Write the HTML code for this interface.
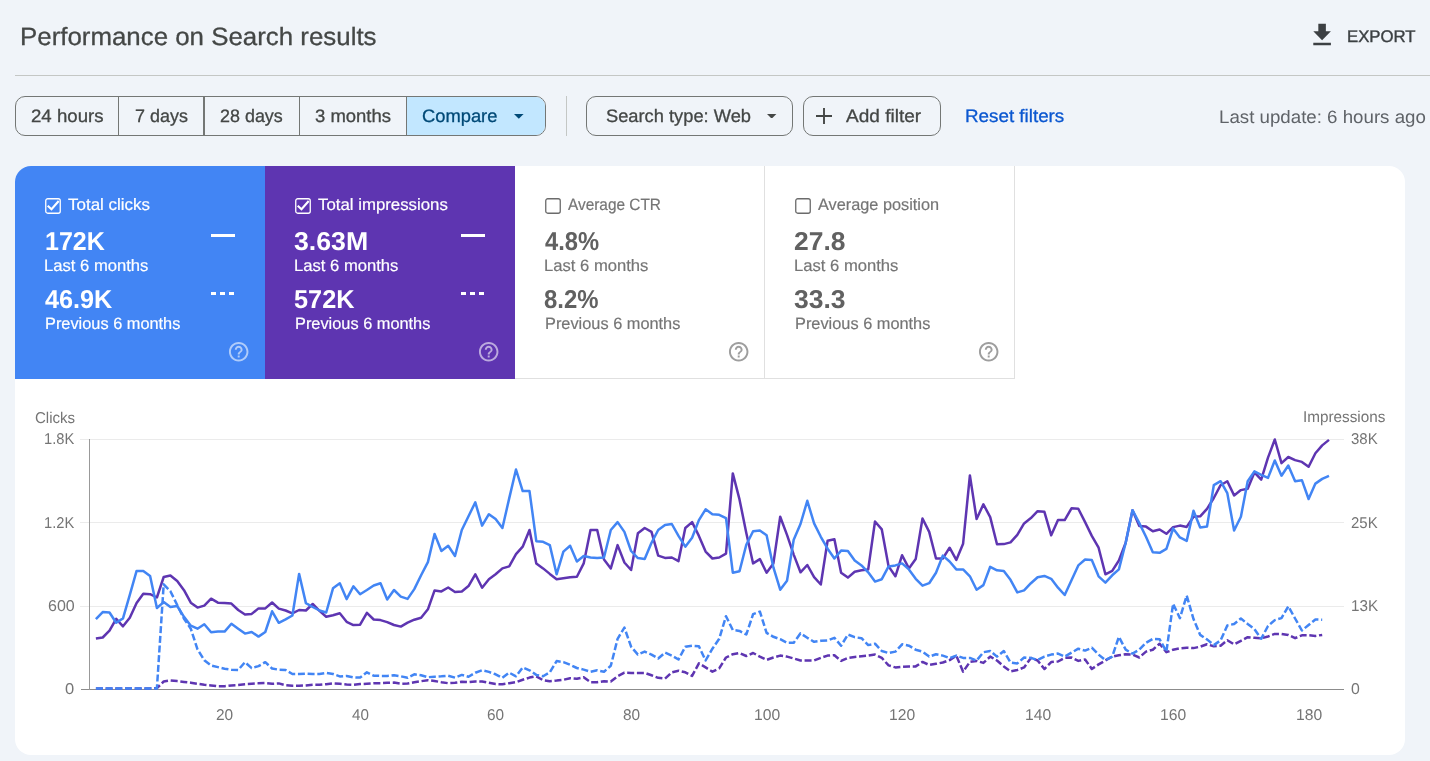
<!DOCTYPE html>
<html lang="en"><head><meta charset="utf-8"><title>Performance on Search results</title>
<style>
html,body{margin:0;padding:0}
body{width:1430px;height:761px;overflow:hidden;background:#f0f4f9;font-family:"Liberation Sans",sans-serif;position:relative}
.a{position:absolute;display:block}
.t{position:absolute;white-space:nowrap;line-height:1;transform-origin:0 84.65%;text-rendering:geometricPrecision}
.btn{position:absolute;box-sizing:border-box;top:96px;height:40px;border:1px solid #747775}
</style></head>
<body>
<svg class="a" style="left:1307px;top:20.2px" width="30.2" height="30.2" viewBox="0 0 24 24"><path fill="#3c4043" d="M19 9h-4V3H9v6H5l7 7 7-7zM5 18v2h14v-2H5z"/></svg>
<div class="a" style="left:15px;top:75px;width:1415px;height:1px;background:#c4c7c5"></div>
<div class="btn" style="left:15px;width:531px;border-radius:10px;overflow:hidden"><div class="a" style="left:390.2px;top:0;width:140px;height:38px;background:#c2e7ff"></div><div class="a" style="left:101.7px;top:0;width:1.2px;height:38px;background:#747775"></div><div class="a" style="left:187.1px;top:0;width:1.6px;height:38px;background:#747775"></div><div class="a" style="left:282.7px;top:0;width:1.2px;height:38px;background:#747775"></div><div class="a" style="left:389.8px;top:0;width:1.2px;height:38px;background:#747775"></div></div>
<svg class="a" style="left:514px;top:113.8px" width="9.6" height="4.8" viewBox="0 0 10 5"><path fill="#004a77" d="M0 0h10L5 5z"/></svg>
<div class="a" style="left:566px;top:96px;width:1px;height:40px;background:#c4c7c5"></div>
<div class="btn" style="left:586px;width:206.8px;border-radius:10px"></div>
<svg class="a" style="left:767.4px;top:113.7px" width="9.4" height="4.7" viewBox="0 0 10 5"><path fill="#444746" d="M0 0h10L5 5z"/></svg>
<div class="btn" style="left:803px;width:137.8px;border-radius:10px"></div>
<svg class="a" style="left:816px;top:107.8px" width="16" height="16" viewBox="0 0 16 16"><path stroke="#444746" stroke-width="1.9" fill="none" d="M8 0v16M0 8h16"/></svg>
<div class="a" style="left:15px;top:166px;width:1390px;height:589.4px;background:#fff;border-radius:16px;overflow:hidden"><div class="a" style="left:0;top:0;width:250px;height:212.5px;background:#4285f4"></div><div class="a" style="left:250px;top:0;width:250px;height:212.5px;background:#5e35b1"></div><div class="a" style="left:500px;top:0;width:249px;height:211.5px;border-right:1px solid #e0e0e0;border-bottom:1px solid #e0e0e0"></div><div class="a" style="left:750px;top:0;width:249px;height:211.5px;border-right:1px solid #e0e0e0;border-bottom:1px solid #e0e0e0"></div></div>
<svg class="a" style="left:45px;top:198px" width="16" height="16" viewBox="0 0 16 16"><rect x="0.75" y="0.75" width="14.5" height="14.5" rx="2" fill="none" stroke="#fff" stroke-width="1.3"/><path d="M2.7 7.7 L6.5 11.2 L13.7 3.0" fill="none" stroke="#fff" stroke-width="2.1"/></svg><div class="a" style="left:211px;top:234.4px;width:24.1px;height:2.8px;background:#fff"></div><div class="a" style="left:211.0px;top:292.3px;width:5.2px;height:3px;background:#fff"></div><div class="a" style="left:220.0px;top:292.3px;width:5.2px;height:3px;background:#fff"></div><div class="a" style="left:229.0px;top:292.3px;width:5.2px;height:3px;background:#fff"></div><svg class="a" style="left:227.2px;top:340px" width="23.4" height="23.4" viewBox="0 0 24 24"><path fill="rgba(255,255,255,0.58)" d="M11 18h2v-2h-2v2zm1-16C6.48 2 2 6.48 2 12s4.48 10 10 10 10-4.48 10-10S17.52 2 12 2zm0 18c-4.41 0-8-3.59-8-8s3.590-8 8-8 8 3.590 8 8-3.590 8-8 8zm0-14c-2.210 0-4 1.790-4 4h2c0-1.100.9-2 2-2s2 .9 2 2c0 2-3 1.750-3 5h2c0-2.250 3-2.500 3-5 0-2.210-1.790-4-4-4z"/></svg>
<svg class="a" style="left:295px;top:198px" width="16" height="16" viewBox="0 0 16 16"><rect x="0.75" y="0.75" width="14.5" height="14.5" rx="2" fill="none" stroke="#fff" stroke-width="1.3"/><path d="M2.7 7.7 L6.5 11.2 L13.7 3.0" fill="none" stroke="#fff" stroke-width="2.1"/></svg><div class="a" style="left:461px;top:234.4px;width:24.1px;height:2.8px;background:#fff"></div><div class="a" style="left:461.0px;top:292.3px;width:5.2px;height:3px;background:#fff"></div><div class="a" style="left:470.0px;top:292.3px;width:5.2px;height:3px;background:#fff"></div><div class="a" style="left:479.0px;top:292.3px;width:5.2px;height:3px;background:#fff"></div><svg class="a" style="left:477.2px;top:340px" width="23.4" height="23.4" viewBox="0 0 24 24"><path fill="rgba(255,255,255,0.58)" d="M11 18h2v-2h-2v2zm1-16C6.48 2 2 6.48 2 12s4.48 10 10 10 10-4.48 10-10S17.52 2 12 2zm0 18c-4.41 0-8-3.59-8-8s3.590-8 8-8 8 3.590 8 8-3.590 8-8 8zm0-14c-2.210 0-4 1.790-4 4h2c0-1.100.9-2 2-2s2 .9 2 2c0 2-3 1.750-3 5h2c0-2.250 3-2.500 3-5 0-2.210-1.790-4-4-4z"/></svg>
<svg class="a" style="left:545px;top:198px" width="16" height="16" viewBox="0 0 16 16"><rect x="0.75" y="0.75" width="14.5" height="14.5" rx="2" fill="#fff" stroke="#6b6b6b" stroke-width="1.3"/></svg><svg class="a" style="left:727.2px;top:340px" width="23.4" height="23.4" viewBox="0 0 24 24"><path fill="#9e9e9e" d="M11 18h2v-2h-2v2zm1-16C6.48 2 2 6.48 2 12s4.48 10 10 10 10-4.48 10-10S17.52 2 12 2zm0 18c-4.41 0-8-3.59-8-8s3.590-8 8-8 8 3.590 8 8-3.590 8-8 8zm0-14c-2.210 0-4 1.790-4 4h2c0-1.100.9-2 2-2s2 .9 2 2c0 2-3 1.750-3 5h2c0-2.250 3-2.500 3-5 0-2.210-1.790-4-4-4z"/></svg>
<svg class="a" style="left:795px;top:198px" width="16" height="16" viewBox="0 0 16 16"><rect x="0.75" y="0.75" width="14.5" height="14.5" rx="2" fill="#fff" stroke="#6b6b6b" stroke-width="1.3"/></svg><svg class="a" style="left:977.2px;top:340px" width="23.4" height="23.4" viewBox="0 0 24 24"><path fill="#9e9e9e" d="M11 18h2v-2h-2v2zm1-16C6.48 2 2 6.48 2 12s4.48 10 10 10 10-4.48 10-10S17.52 2 12 2zm0 18c-4.41 0-8-3.59-8-8s3.590-8 8-8 8 3.590 8 8-3.590 8-8 8zm0-14c-2.210 0-4 1.790-4 4h2c0-1.100.9-2 2-2s2 .9 2 2c0 2-3 1.750-3 5h2c0-2.250 3-2.500 3-5 0-2.210-1.790-4-4-4z"/></svg>
<svg class="a" style="left:0;top:400px" width="1430" height="361" viewBox="0 400 1430 361">
<rect x="80" y="439" width="1264" height="1" fill="#ebebeb"/>
<rect x="80" y="522" width="1264" height="1" fill="#ebebeb"/>
<rect x="80" y="606" width="1264" height="1" fill="#ebebeb"/>
<rect x="81" y="689" width="1263" height="1" fill="#8c8c8c"/>
<rect x="89" y="439" width="1" height="251" fill="#999"/>
<defs><clipPath id="ca"><rect x="89" y="430" width="1256" height="260"/></clipPath></defs><g clip-path="url(#ca)">
<polyline fill="none" stroke="#5e35b1" stroke-width="2.5" stroke-linejoin="round" stroke-dasharray="7 2.7" points="95.9,688.4 102.7,688.4 109.5,688.4 116.2,688.4 123.0,688.4 129.8,688.4 136.6,688.4 143.3,688.4 150.1,688.4 156.9,688.2 163.7,681.5 170.4,680.5 177.2,681.1 184.0,681.9 190.8,682.7 197.5,683.8 204.3,684.8 211.1,685.4 217.9,686.2 224.6,686.2 231.4,685.4 238.2,685.0 245.0,684.2 251.7,683.8 258.5,683.3 265.3,683.1 272.1,683.8 278.8,683.4 285.6,685.2 292.4,685.8 299.1,685.8 305.9,685.4 312.7,684.8 319.5,684.8 326.2,684.2 333.0,683.4 339.8,683.8 346.6,684.4 353.4,684.8 360.1,684.1 366.9,683.7 373.7,683.2 380.5,683.2 387.2,682.8 394.0,682.6 400.8,683.7 407.6,683.5 414.3,682.2 421.1,681.2 427.9,680.2 434.6,681.0 441.4,682.2 448.2,683.2 455.0,682.8 461.8,681.8 468.5,682.2 475.3,681.4 482.1,681.6 488.9,682.8 495.6,684.1 502.4,684.3 509.2,683.2 516.0,682.2 522.7,679.8 529.5,677.6 536.3,676.3 543.1,680.2 549.8,681.2 556.6,680.6 563.4,679.8 570.1,678.2 576.9,678.8 583.7,677.2 590.5,682.2 597.2,682.2 604.0,681.2 610.8,681.6 617.6,676.3 624.4,672.7 631.1,672.9 637.9,672.9 644.7,672.9 651.5,675.3 658.2,677.8 665.0,678.6 671.8,672.3 678.5,670.7 685.3,672.3 692.1,675.9 698.9,663.4 705.6,667.4 712.4,671.7 719.2,668.4 726.0,657.5 732.8,654.2 739.5,653.0 746.3,656.0 753.1,653.0 759.9,656.6 766.6,659.9 773.4,657.5 780.2,655.6 787.0,656.6 793.7,658.5 800.5,660.5 807.3,660.5 814.1,660.5 820.8,657.9 827.6,655.6 834.4,655.2 841.1,660.9 847.9,657.9 854.7,656.9 861.5,656.2 868.2,655.6 875.0,654.6 881.8,657.9 888.6,665.4 895.4,667.4 902.1,666.8 908.9,666.4 915.7,666.4 922.5,661.9 929.2,665.0 936.0,663.8 942.8,662.5 949.6,660.1 956.3,655.6 963.1,671.7 969.9,661.9 976.6,660.9 983.4,662.9 990.2,656.6 997.0,660.5 1003.8,666.4 1010.5,671.3 1017.3,670.0 1024.1,667.4 1030.9,657.9 1037.6,660.5 1044.4,669.0 1051.2,662.1 1058.0,661.5 1064.7,657.9 1071.5,657.5 1078.3,660.9 1085.1,659.5 1091.8,669.0 1098.6,664.4 1105.4,660.5 1112.2,656.6 1118.9,655.2 1125.7,654.2 1132.5,654.6 1139.3,657.5 1146.0,651.6 1152.8,649.7 1159.6,643.7 1166.4,652.2 1173.1,649.7 1179.9,648.3 1186.7,647.7 1193.5,648.1 1200.2,646.7 1207.0,644.3 1213.8,646.3 1220.6,645.7 1227.3,640.2 1234.1,644.3 1240.9,640.8 1247.7,637.2 1254.4,637.8 1261.2,638.4 1268.0,636.5 1274.8,633.9 1281.5,633.9 1288.3,634.9 1295.1,638.2 1301.9,635.3 1308.6,635.3 1315.4,635.9 1322.2,634.9"/>
<polyline fill="none" stroke="#5e35b1" stroke-width="2.5" stroke-linejoin="round" points="95.9,638.5 102.7,637.5 109.5,630.6 116.2,618.8 123.0,626.3 129.8,617.8 136.6,603.1 143.3,593.8 150.1,594.2 156.9,597.5 163.7,577.0 170.4,575.5 177.2,581.0 184.0,590.2 190.8,602.7 197.5,607.6 204.3,605.6 211.1,598.7 217.9,602.7 224.6,603.1 231.4,603.6 238.2,610.0 245.0,614.5 251.7,613.9 258.5,608.4 265.3,608.4 272.1,602.5 278.8,608.6 285.6,610.5 292.4,613.3 299.1,610.0 305.9,610.5 312.7,604.0 319.5,610.9 326.2,616.8 333.0,615.3 339.8,613.3 346.6,621.8 353.4,625.1 360.1,624.7 366.9,612.8 373.7,619.5 380.5,620.1 387.2,622.1 394.0,625.0 400.8,626.6 407.6,622.7 414.3,619.7 421.1,617.7 427.9,609.3 434.6,590.4 441.4,591.4 448.2,587.5 455.0,592.0 461.8,591.4 468.5,586.1 475.3,574.3 482.1,587.7 488.9,579.2 495.6,574.3 502.4,568.4 509.2,566.4 516.0,554.2 522.7,546.7 529.5,530.0 536.3,563.4 543.1,568.4 549.8,573.9 556.6,579.2 563.4,578.2 570.1,577.2 576.9,576.7 583.7,563.4 590.5,530.0 597.2,530.0 604.0,559.5 610.8,568.4 617.6,545.1 624.4,562.5 631.1,570.0 637.9,533.3 644.7,528.0 651.5,531.9 658.2,555.6 665.0,557.9 671.8,557.5 678.5,561.1 685.3,528.0 692.1,522.1 698.9,535.9 705.6,551.6 712.4,558.5 719.2,557.5 726.0,553.6 732.8,473.4 739.5,499.4 746.3,532.9 753.1,563.4 759.9,559.1 766.6,572.7 773.4,563.4 780.2,516.7 787.0,534.9 793.7,554.6 800.5,572.3 807.3,565.0 814.1,577.2 820.8,584.5 827.6,540.8 834.4,539.2 841.1,572.7 847.9,577.6 854.7,571.7 861.5,570.3 868.2,569.4 875.0,521.5 881.8,529.4 888.6,566.4 895.4,576.3 902.1,555.2 908.9,568.4 915.7,559.1 922.5,518.5 929.2,531.9 936.0,558.5 942.8,558.5 949.6,547.7 956.3,559.9 963.1,543.7 969.9,475.4 976.6,519.1 983.4,504.3 990.2,517.1 997.0,544.3 1003.8,544.1 1010.5,542.4 1017.3,534.9 1024.1,523.4 1030.9,518.1 1037.6,511.2 1044.4,511.8 1051.2,535.3 1058.0,520.1 1064.7,520.1 1071.5,508.3 1078.3,508.7 1085.1,522.1 1091.8,535.9 1098.6,547.7 1105.4,574.3 1112.2,570.9 1118.9,560.5 1125.7,542.8 1132.5,510.2 1139.3,526.0 1146.0,526.6 1152.8,531.3 1159.6,529.5 1166.4,533.8 1173.1,527.1 1179.9,525.6 1186.7,526.9 1193.5,516.7 1200.2,516.3 1207.0,508.8 1213.8,498.0 1220.6,485.2 1227.3,481.2 1234.1,495.4 1240.9,490.1 1247.7,488.7 1254.4,472.4 1261.2,479.7 1268.0,457.6 1274.8,439.5 1281.5,463.1 1288.3,457.0 1295.1,460.1 1301.9,461.9 1308.6,466.8 1315.4,453.3 1322.2,445.4 1329.0,439.9"/>
<polyline fill="none" stroke="#4285f4" stroke-width="2.5" stroke-linejoin="round" stroke-dasharray="7 2.7" points="95.9,688.4 102.7,688.4 109.5,688.4 116.2,688.4 123.0,688.4 129.8,688.4 136.6,688.4 143.3,688.4 150.1,688.4 156.9,688.4 163.7,584.3 170.4,591.2 177.2,605.0 184.0,618.8 190.8,628.7 197.5,649.4 204.3,660.2 211.1,665.5 217.9,667.1 224.6,668.7 231.4,669.7 238.2,670.0 245.0,662.2 251.7,668.1 258.5,666.1 265.3,662.2 272.1,668.5 278.8,669.7 285.6,670.0 292.4,674.0 299.1,674.0 305.9,673.6 312.7,674.0 319.5,674.0 326.2,673.0 333.0,674.0 339.8,676.4 346.6,676.0 353.4,677.3 360.1,677.6 366.9,672.3 373.7,675.7 380.5,675.9 387.2,675.9 394.0,675.3 400.8,676.3 407.6,677.8 414.3,674.3 421.1,675.3 427.9,677.2 434.6,676.7 441.4,676.3 448.2,675.7 455.0,677.6 461.8,674.9 468.5,676.8 475.3,672.7 482.1,670.3 488.9,671.9 495.6,674.3 502.4,677.8 509.2,672.7 516.0,676.3 522.7,667.4 529.5,670.3 536.3,674.9 543.1,676.3 549.8,672.3 556.6,661.1 563.4,662.1 570.1,664.8 576.9,668.0 583.7,669.6 590.5,671.7 597.2,670.3 604.0,671.7 610.8,665.8 617.6,638.8 624.4,627.6 631.1,646.7 637.9,654.6 644.7,651.6 651.5,654.6 658.2,658.5 665.0,652.6 671.8,655.6 678.5,659.5 685.3,646.7 692.1,645.7 698.9,646.3 705.6,660.5 712.4,648.7 719.2,638.8 726.0,616.2 732.8,630.0 739.5,630.9 746.3,634.5 753.1,614.2 759.9,611.6 766.6,632.9 773.4,636.8 780.2,639.2 787.0,642.8 793.7,642.8 800.5,633.3 807.3,637.8 814.1,641.8 820.8,640.8 827.6,640.4 834.4,637.8 841.1,645.7 847.9,634.5 854.7,637.2 861.5,638.2 868.2,645.1 875.0,643.7 881.8,651.0 888.6,653.0 895.4,651.6 902.1,644.3 908.9,645.7 915.7,649.7 922.5,651.6 929.2,656.6 936.0,654.2 942.8,655.6 949.6,658.1 956.3,655.6 963.1,657.9 969.9,657.9 976.6,660.5 983.4,652.2 990.2,651.0 997.0,656.6 1003.8,651.0 1010.5,662.5 1017.3,663.4 1024.1,657.5 1030.9,657.9 1037.6,660.1 1044.4,656.6 1051.2,654.6 1058.0,653.6 1064.7,656.6 1071.5,652.6 1078.3,648.7 1085.1,650.6 1091.8,647.7 1098.6,654.6 1105.4,660.1 1112.2,656.6 1118.9,636.8 1125.7,649.7 1132.5,653.6 1139.3,649.7 1146.0,642.8 1152.8,638.8 1159.6,639.2 1166.4,651.6 1173.1,603.7 1179.9,618.1 1186.7,595.5 1193.5,619.1 1200.2,634.9 1207.0,639.4 1213.8,645.1 1220.6,640.4 1227.3,625.4 1234.1,624.0 1240.9,618.5 1247.7,624.0 1254.4,629.0 1261.2,638.8 1268.0,626.0 1274.8,620.1 1281.5,618.1 1288.3,606.3 1295.1,618.5 1301.9,630.5 1308.6,625.0 1315.4,619.5 1322.2,619.7"/>
<polyline fill="none" stroke="#4285f4" stroke-width="2.5" stroke-linejoin="round" points="95.9,619.2 102.7,612.1 109.5,612.5 116.2,622.8 123.0,618.4 129.8,594.8 136.6,570.9 143.3,571.1 150.1,576.1 156.9,608.0 163.7,602.1 170.4,607.0 177.2,606.0 184.0,616.8 190.8,625.7 197.5,628.7 204.3,624.3 211.1,632.2 217.9,631.6 224.6,631.6 231.4,623.7 238.2,628.7 245.0,633.6 251.7,632.0 258.5,636.6 265.3,632.0 272.1,611.3 278.8,622.8 285.6,619.4 292.4,615.5 299.1,573.9 305.9,603.1 312.7,607.0 319.5,610.5 326.2,612.5 333.0,588.3 339.8,583.3 346.6,599.1 353.4,586.3 360.1,594.2 366.9,590.0 373.7,585.5 380.5,583.2 387.2,599.5 394.0,590.0 400.8,596.6 407.6,598.9 414.3,589.1 421.1,575.3 427.9,562.1 434.6,533.9 441.4,551.0 448.2,545.7 455.0,556.0 461.8,530.0 468.5,516.2 475.3,502.4 482.1,525.6 488.9,514.2 495.6,519.1 502.4,528.0 509.2,498.4 516.0,469.5 522.7,491.1 529.5,491.1 536.3,541.2 543.1,541.8 549.8,545.1 556.6,574.3 563.4,551.6 570.1,545.7 576.9,561.5 583.7,556.0 590.5,557.5 597.2,558.1 604.0,557.5 610.8,530.0 617.6,522.1 624.4,531.9 631.1,551.0 637.9,558.1 644.7,559.1 651.5,542.8 658.2,530.0 665.0,525.0 671.8,524.0 678.5,535.9 685.3,546.7 692.1,537.8 698.9,520.1 705.6,509.3 712.4,514.2 719.2,514.8 726.0,518.1 732.8,572.7 739.5,571.3 746.3,544.7 753.1,531.3 759.9,530.5 766.6,535.3 773.4,567.4 780.2,589.7 787.0,580.8 793.7,539.8 800.5,524.0 807.3,500.8 814.1,523.4 820.8,536.8 827.6,548.7 834.4,558.5 841.1,550.6 847.9,551.0 854.7,560.5 861.5,565.4 868.2,572.3 875.0,581.6 881.8,579.2 888.6,566.4 895.4,565.4 902.1,563.4 908.9,569.4 915.7,578.8 922.5,585.7 929.2,583.2 936.0,572.7 942.8,555.6 949.6,561.5 956.3,569.4 963.1,569.4 969.9,576.3 976.6,589.7 983.4,585.1 990.2,566.8 997.0,570.3 1003.8,570.9 1010.5,579.8 1017.3,592.4 1024.1,590.4 1030.9,583.2 1037.6,577.2 1044.4,575.9 1051.2,578.8 1058.0,587.7 1064.7,595.0 1071.5,580.2 1078.3,565.4 1085.1,559.5 1091.8,560.1 1098.6,576.3 1105.4,582.6 1112.2,575.3 1118.9,569.4 1125.7,542.8 1132.5,510.2 1139.3,523.1 1146.0,536.8 1152.8,552.2 1159.6,552.8 1166.4,548.8 1173.1,528.5 1179.9,537.4 1186.7,540.9 1193.5,510.8 1200.2,527.5 1207.0,526.6 1213.8,485.2 1220.6,481.2 1227.3,493.1 1234.1,530.5 1240.9,516.7 1247.7,481.2 1254.4,471.4 1261.2,474.9 1268.0,477.9 1274.8,460.5 1281.5,475.7 1288.3,465.5 1295.1,481.2 1301.9,480.2 1308.6,499.0 1315.4,483.6 1322.2,478.9 1329.0,475.9"/>
</g>
</svg>
<div id="txt" style="position:absolute;left:0;top:0;width:1430px;height:761px;will-change:transform">
<span class="t" style="left:20.04px;top:24.84px;font-size:25px;color:#444746;transform:scaleX(1.0345);-webkit-text-stroke:0.3px #444746">Performance on Search results</span>
<span class="t" style="left:1347.08px;top:28.73px;font-size:16.9px;color:#3c4043;transform:scaleX(0.9921);-webkit-text-stroke:0.4px #3c4043">EXPORT</span>
<span class="t" style="left:30.61px;top:106.76px;font-size:18px;color:#444746;transform:scaleX(1.0354);-webkit-text-stroke:0.3px #444746">24 hours</span>
<span class="t" style="left:135.48px;top:106.76px;font-size:18px;color:#444746;transform:scaleX(0.9965);-webkit-text-stroke:0.3px #444746">7 days</span>
<span class="t" style="left:219.96px;top:106.76px;font-size:18px;color:#444746;transform:scaleX(0.9955);-webkit-text-stroke:0.3px #444746">28 days</span>
<span class="t" style="left:315.19px;top:106.76px;font-size:18px;color:#444746;transform:scaleX(1.0269);-webkit-text-stroke:0.3px #444746">3 months</span>
<span class="t" style="left:421.98px;top:106.76px;font-size:18px;color:#004a77;transform:scaleX(1.0186);-webkit-text-stroke:0.3px #004a77">Compare</span>
<span class="t" style="left:605.53px;top:106.76px;font-size:18px;color:#444746;transform:scaleX(1.0157);-webkit-text-stroke:0.3px #444746">Search type: Web</span>
<span class="t" style="left:846.08px;top:106.76px;font-size:18px;color:#444746;transform:scaleX(1.0571);-webkit-text-stroke:0.3px #444746">Add filter</span>
<span class="t" style="left:964.91px;top:106.76px;font-size:18px;color:#0b57d0;transform:scaleX(1.0445);-webkit-text-stroke:0.3px #0b57d0">Reset filters</span>
<span class="t" style="left:1219.35px;top:107.76px;font-size:18px;color:#5f6368;transform:scaleX(1.0387)">Last update: 6 hours ago</span>
<span class="t" style="left:67.79px;top:196.83px;font-size:16.5px;color:#fff;transform:scaleX(1.0284);-webkit-text-stroke:0.2px #fff">Total clicks</span>
<span class="t" style="left:44.74px;top:229.58px;font-size:25.8px;color:#fff;transform:scaleX(0.9701);font-weight:700">172K</span>
<span class="t" style="left:44.47px;top:257.93px;font-size:16.5px;color:#fff;transform:scaleX(1.0074);-webkit-text-stroke:0.2px #fff">Last 6 months</span>
<span class="t" style="left:44.78px;top:287.58px;font-size:25.8px;color:#fff;transform:scaleX(0.9775);font-weight:700">46.9K</span>
<span class="t" style="left:44.53px;top:315.93px;font-size:16.5px;color:#fff;transform:scaleX(0.9906);-webkit-text-stroke:0.2px #fff">Previous 6 months</span>
<span class="t" style="left:317.80px;top:196.83px;font-size:16.5px;color:#fff;transform:scaleX(1.0187);-webkit-text-stroke:0.2px #fff">Total impressions</span>
<span class="t" style="left:294.42px;top:229.93px;font-size:25.8px;color:#fff;transform:scaleX(1.0345);font-weight:700">3.63M</span>
<span class="t" style="left:294.47px;top:257.93px;font-size:16.5px;color:#fff;transform:scaleX(1.0074);-webkit-text-stroke:0.2px #fff">Last 6 months</span>
<span class="t" style="left:293.85px;top:287.59px;font-size:25.8px;color:#fff;transform:scaleX(0.9807);font-weight:700">572K</span>
<span class="t" style="left:294.53px;top:315.93px;font-size:16.5px;color:#fff;transform:scaleX(0.9906);-webkit-text-stroke:0.2px #fff">Previous 6 months</span>
<span class="t" style="left:568.07px;top:196.83px;font-size:16.5px;color:#757575;transform:scaleX(0.9322);-webkit-text-stroke:0.2px #757575">Average CTR</span>
<span class="t" style="left:544.84px;top:229.95px;font-size:25.8px;color:#616161;transform:scaleX(0.9211);font-weight:700">4.8%</span>
<span class="t" style="left:544.47px;top:257.93px;font-size:16.5px;color:#757575;transform:scaleX(1.0074);-webkit-text-stroke:0.2px #757575">Last 6 months</span>
<span class="t" style="left:544.46px;top:287.58px;font-size:25.8px;color:#616161;transform:scaleX(0.9264);font-weight:700">8.2%</span>
<span class="t" style="left:544.53px;top:315.93px;font-size:16.5px;color:#757575;transform:scaleX(0.9906);-webkit-text-stroke:0.2px #757575">Previous 6 months</span>
<span class="t" style="left:818.05px;top:196.83px;font-size:16.5px;color:#757575;transform:scaleX(0.9874);-webkit-text-stroke:0.2px #757575">Average position</span>
<span class="t" style="left:794.02px;top:229.94px;font-size:25.8px;color:#616161;transform:scaleX(1.0245);font-weight:700">27.8</span>
<span class="t" style="left:794.47px;top:257.93px;font-size:16.5px;color:#757575;transform:scaleX(1.0074);-webkit-text-stroke:0.2px #757575">Last 6 months</span>
<span class="t" style="left:794.43px;top:287.58px;font-size:25.8px;color:#616161;transform:scaleX(1.0271);font-weight:700">33.3</span>
<span class="t" style="left:794.53px;top:315.93px;font-size:16.5px;color:#757575;transform:scaleX(0.9906);-webkit-text-stroke:0.2px #757575">Previous 6 months</span>
<span class="t" style="left:35.04px;top:410.75px;font-size:15.6px;color:#757575;transform:scaleX(0.9654)">Clicks</span>
<span class="t" style="left:1302.91px;top:410.39px;font-size:15.6px;color:#757575;transform:scaleX(0.9798)">Impressions</span>
<span class="t" style="left:44.18px;top:432.12px;font-size:15.6px;color:#757575;transform:scaleX(0.9424)">1.8K</span>
<span class="t" style="left:44.18px;top:515.85px;font-size:15.6px;color:#757575;transform:scaleX(0.9424)">1.2K</span>
<span class="t" style="left:47.88px;top:599.10px;font-size:15.6px;color:#757575;transform:scaleX(1.0271)">600</span>
<span class="t" style="left:65.41px;top:681.59px;font-size:15.6px;color:#757575;transform:scaleX(1.0576)">0</span>
<span class="t" style="left:1351.16px;top:432.13px;font-size:15.6px;color:#757575;transform:scaleX(0.9610)">38K</span>
<span class="t" style="left:1351.19px;top:515.69px;font-size:15.6px;color:#757575;transform:scaleX(0.9597)">25K</span>
<span class="t" style="left:1351.06px;top:599.11px;font-size:15.6px;color:#757575;transform:scaleX(0.9769)">13K</span>
<span class="t" style="left:1351.07px;top:682.11px;font-size:15.6px;color:#757575;transform:scaleX(1.0166)">0</span>
<span class="t" style="left:215.89px;top:708.00px;font-size:15.6px;color:#757575;transform:scaleX(0.9916)">20</span>
<span class="t" style="left:352.29px;top:707.85px;font-size:15.6px;color:#757575;transform:scaleX(0.9727)">40</span>
<span class="t" style="left:487.12px;top:707.81px;font-size:15.6px;color:#757575;transform:scaleX(0.9842)">60</span>
<span class="t" style="left:623.15px;top:707.86px;font-size:15.6px;color:#757575;transform:scaleX(0.9872)">80</span>
<span class="t" style="left:753.55px;top:707.88px;font-size:15.6px;color:#757575;transform:scaleX(1.0063)">100</span>
<span class="t" style="left:889.12px;top:707.90px;font-size:15.6px;color:#757575;transform:scaleX(1.0048)">120</span>
<span class="t" style="left:1024.55px;top:707.88px;font-size:15.6px;color:#757575;transform:scaleX(1.0063)">140</span>
<span class="t" style="left:1160.12px;top:707.81px;font-size:15.6px;color:#757575;transform:scaleX(1.0048)">160</span>
<span class="t" style="left:1295.55px;top:707.88px;font-size:15.6px;color:#757575;transform:scaleX(1.0063)">180</span>
</div>
</body></html>
